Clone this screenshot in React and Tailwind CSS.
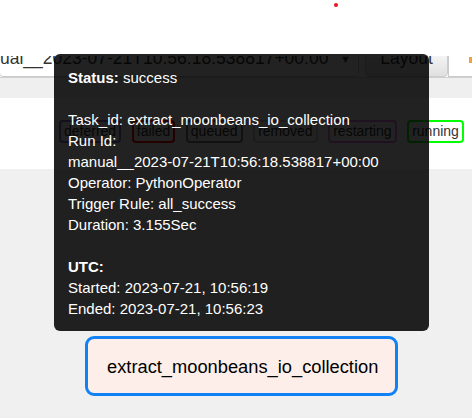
import React from 'react';

const states = [
    { name: 'deferred', color: 'border-[#9370db]' },
    { name: 'failed', color: 'border-[#ff0000]' },
    { name: 'queued', color: 'border-[#808080]' },
    { name: 'removed', color: 'border-[#d3d3d3]' },
    { name: 'restarting', color: 'border-[#ee82ee]' },
    { name: 'running', color: 'border-[#00ff00]' },
];

const Tooltip = () => (
    <div className="absolute left-[54px] top-[54px] w-[375px] h-[277px] rounded-[6px] bg-[rgba(0,0,0,0.865)] text-white text-[15px] leading-[21px] px-[14px] pt-[13px]">
        <div><span className="font-bold">Status:</span> success</div>
        <div>&nbsp;</div>
        <div>Task_id: extract_moonbeans_io_collection</div>
        <div>Run Id:</div>
        <div>manual__2023-07-21T10:56:18.538817+00:00</div>
        <div>Operator: PythonOperator</div>
        <div>Trigger Rule: all_success</div>
        <div>Duration: 3.155Sec</div>
        <div>&nbsp;</div>
        <div className="font-bold">UTC:</div>
        <div>Started: 2023-07-21, 10:56:19</div>
        <div>Ended: 2023-07-21, 10:56:23</div>
    </div>
);

const App = () => {
    return (
        <div className="relative w-[472px] h-[418px] overflow-hidden bg-[#f0f0f0] font-['Liberation_Sans',Arial,sans-serif]">
            {/* top */}
            <div className="h-[56px] bg-white relative">
                <div className="absolute left-[334px] top-[3px] w-[4px] h-[4px] rounded-full bg-[#e8141a]" />
            </div>

            {/* toolbar, cut off at the top */}
            <div className="h-[22px] bg-white overflow-hidden border-b border-[#cfcfcf] flex items-end">
                <div className="shrink-0 w-[360px] h-[34px] -ml-[1px] border border-[#cccccc] rounded-b-[4px] flex items-end justify-between pb-[9px] pl-0 pr-[7px] text-[17.5px] text-[#333] leading-none">
                    <span className="whitespace-nowrap">ual__2023-07-21T10:56:18.538817+00:00</span>
                    <span className="text-[11px] text-[#555] pb-[2px]">▼</span>
                </div>
                <div className="shrink-0 ml-[6px] w-[83px] h-[34px] border border-[#cccccc] rounded-b-[4px] bg-gradient-to-b from-white to-[#e0e0e0] flex items-end justify-center pb-[9px] text-[17.5px] text-[#333] leading-none">
                    Layout
                </div>
                <div className="shrink-0 w-[30px] h-[34px] border border-[#cccccc] bg-white flex items-end pb-[13px] pl-[20px]">
                    <span className="w-[3px] h-[6px] bg-[#f0a040]" />
                </div>
            </div>
            <div className="h-[20px] bg-[#efefef]" />

            {/* legend */}
            <div className="h-[71px] bg-white pt-[22px] pl-[59px] flex gap-[10.6px] items-start">
                {states.map((s) => (
                    <span
                        key={s.name}
                        className={`shrink-0 h-[23px] border-2 ${s.color} rounded-[4px] px-[3px] text-[14px] leading-[19px] text-[#333] whitespace-nowrap`}
                    >
                        {s.name}
                    </span>
                ))}
            </div>

            {/* graph */}
            <div className="pt-[167px] pl-[85px]">
                <div className="w-[313px] h-[60px] border-[3px] border-[#1182f6] rounded-[9px] bg-[#fdeee9] flex items-center pl-[19px] pt-[2px] text-[18.3px] text-black">
                    extract_moonbeans_io_collection
                </div>
            </div>

            <Tooltip />
        </div>
    );
};

export default App;
